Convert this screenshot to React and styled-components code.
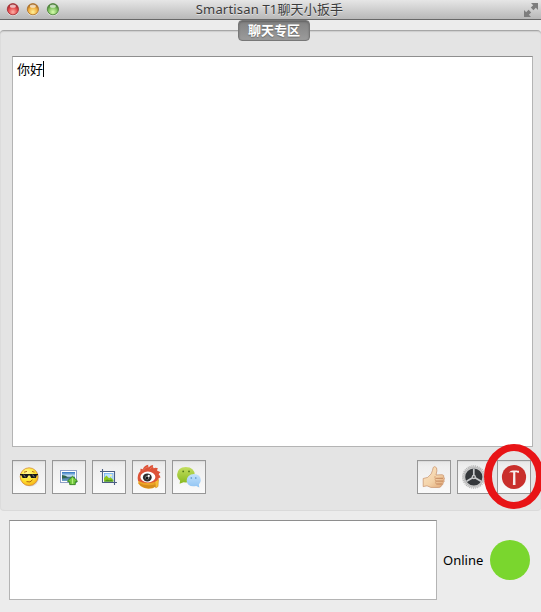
import React from "react";
import styled, { createGlobalStyle } from "styled-components";

const GlobalStyle = createGlobalStyle`
  * { box-sizing: border-box; }
  body {
    margin: 0;
    background: #ececec;
    font-family: "Noto Sans", "Noto Sans CJK SC", sans-serif;
    font-size: 13px;
    color: #000;
  }
`;

const Window = styled.div`
  width: 541px;
  height: 612px;
  overflow: hidden;
  display: flex;
  flex-direction: column;
  background: #ececec;
`;

const TitleBar = styled.header`
  flex: 0 0 20px;
  display: grid;
  grid-template-columns: 100px 1fr 100px;
  align-items: center;
  background: linear-gradient(#e6e6e6, #b8b8b8);
  border-bottom: 1px solid #686868;
`;

const Lights = styled.div`
  display: flex;
  gap: 7px;
  padding-left: 6px;
`;

const Title = styled.h1`
  margin: 0;
  padding-right: 2px;
  font-size: 13px;
  font-weight: 400;
  line-height: 19px;
  letter-spacing: 0.17px;
  text-align: center;
  white-space: nowrap;
  color: #3b3b3b;
  text-shadow: 0 1px 0 rgba(255, 255, 255, 0.5);
`;

const FullScreen = styled.svg`
  justify-self: end;
  margin-right: 3px;
`;

const TabStrip = styled.nav`
  flex: none;
  height: 10px;
  display: flex;
  justify-content: center;
  align-items: flex-start;
  padding-left: 7px;
`;

const Tab = styled.button`
  position: relative;
  z-index: 1;
  flex: none;
  width: 72px;
  height: 21px;
  padding: 0 0 2px;
  border: 1px solid #777;
  border-radius: 4px;
  background: linear-gradient(#828282, #8c8c8c 40%, #9b9b9b);
  box-shadow: inset 0 1px 2px rgba(0, 0, 0, 0.25);
  color: #fff;
  font: 700 13px/17px "Noto Sans CJK SC", sans-serif;
  text-shadow: 0 1px 1px rgba(0, 0, 0, 0.3);
`;

const ChatPane = styled.section`
  flex: 0 0 481px;
  padding: 25px 8px 0 12px;
  background: #e4e4e4;
  border-top: 1px solid #a6a6a6;
  border-bottom: 1px solid #dadada;
  border-radius: 4px;
  box-shadow: inset 0 1px 1px #cdcdcd, inset 1px 0 0 #dedede;
`;

const TextBox = styled.div`
  width: ${(p) => p.$width}px;
  height: ${(p) => p.$height}px;
  padding: 3px 4px;
  background: #fff;
  border: 1px solid #b4b4b4;
  border-top-color: #8e8e8e;
  line-height: 18px;
  display: flex;
`;

const Caret = styled.span`
  width: 1px;
  height: 16px;
  margin-top: 1px;
  background: #000;
`;

const Toolbar = styled.div`
  display: flex;
  justify-content: space-between;
  padding: 13px 2px 0 0;
`;

const ButtonGroup = styled.div`
  display: flex;
  gap: 6px;
`;

const ToolButton = styled.button`
  position: relative;
  width: 34px;
  height: 34px;
  padding: 0;
  border: 1px solid #979797;
  background: linear-gradient(#e6e6e6, #eeeeee 16%, #fafafa);
  box-shadow: inset 0 1px 0 #dcdcdc;

  & > svg { display: block; }
`;

const Ring = styled.span`
  position: absolute;
  z-index: 2;
  top: -17px;
  left: -14px;
  width: 60px;
  height: 65px;
  border: 8px solid #e81416;
  border-width: 7px 8px;
  border-radius: 50%;
  pointer-events: none;
`;

const Composer = styled.footer`
  flex: 1;
  display: flex;
  align-items: flex-start;
  padding: 9px 0 0 9px;
`;

const Status = styled.div`
  height: 80px;
  display: flex;
  align-items: center;
  padding-left: 6px;
`;

const StatusLabel = styled.span`
  width: 47px;
  white-space: nowrap;
`;

const StatusDot = styled.span`
  width: 40px;
  height: 40px;
  border-radius: 50%;
  background: #7ad62e;
`;

function Light({ id, dark, mid, light }) {
  return (
    <svg width="13" height="13" viewBox="0 0 13 13">
      <defs>
        <radialGradient id={id} cx="50%" cy="75%" r="65%">
          <stop offset="0" stopColor={light} />
          <stop offset="0.65" stopColor={mid} />
          <stop offset="1" stopColor={dark} />
        </radialGradient>
      </defs>
      <circle cx="6.9" cy="7" r="6" fill="#f2f2f2" opacity="0.6" />
      <circle cx="6.9" cy="6.2" r="5.6" fill={`url(#${id})`} stroke={dark} strokeWidth="0.8" />
      <ellipse cx="6.9" cy="3.2" rx="3" ry="1.6" fill="#fff" opacity="0.65" />
    </svg>
  );
}

function Glyph({ children }) {
  return <svg width="32" height="32" viewBox="1 1 32 32">{children}</svg>;
}

function SmileIcon() {
  return (
    <Glyph>
      <defs>
        <radialGradient id="smile" cx="40%" cy="30%" r="70%">
          <stop offset="0" stopColor="#fff799" />
          <stop offset="0.6" stopColor="#ffe62e" />
          <stop offset="1" stopColor="#f7b51d" />
        </radialGradient>
      </defs>
      <circle cx="18" cy="17.6" r="8.9" fill="#000" opacity="0.12" />
      <circle cx="17.1" cy="16.7" r="8.9" fill="url(#smile)" stroke="#d58a32" strokeWidth="0.8" />
      <path d="M12 12.2l3-.8M20 11.4l2.5.8" stroke="#a85a16" strokeWidth="0.9" />
      <path d="M8 14h18v1.3h-1.2l-1 2.7h-4.6L18 15.5h-1.6L15 18h-4.4L9.4 15.3H8z" fill="#171717" />
      <path d="M11.5 15l2 1.8M20.5 15l2 1.8" stroke="#bbb" strokeWidth="0.8" />
      <path d="M14.5 21.6q4 1.6 6-1.8" fill="none" stroke="#b06012" strokeWidth="1" />
    </Glyph>
  );
}

function PictureIcon() {
  return (
    <Glyph>
      <defs>
        <linearGradient id="scene" x2="0" y2="1">
          <stop offset="0" stopColor="#2a70bd" />
          <stop offset="0.45" stopColor="#d4ebf8" />
          <stop offset="0.6" stopColor="#47728d" />
          <stop offset="1" stopColor="#6fa4cf" />
        </linearGradient>
      </defs>
      <rect x="8.5" y="10.5" width="16" height="12" fill="#fff" stroke="#8e9fc6" />
      <rect x="10" y="12" width="13" height="9" fill="url(#scene)" />
      <path d="M10 15q4 0 6 2.5l-6 1z" fill="#2f644c" />
      <path d="M20.5 16.3l4.7 4.4v1h-1.9v2.9h-5.6v-2.9h-1.9v-1z" fill="#73c93c" stroke="#2f801c" strokeWidth="0.9" />
      <path d="M20.5 18.3v5.5" stroke="#b5ec83" strokeWidth="1.2" />
    </Glyph>
  );
}

function CropIcon() {
  return (
    <Glyph>
      <path d="M11 12h11v10H11z" fill="#fff" />
      <rect x="12.4" y="13.4" width="8.6" height="7.8" fill="#bfe2fc" stroke="#6eaff0" strokeWidth="0.8" />
      <path d="M12 21.6V18l2.5-2.5 2.5 2.7 1.6-1 2.8 2.8v1.6z" fill="#8ec61c" />
      <path d="M12 21.6l3-2.1 2.5.8 1.8-.8 2.1 2.1z" fill="#4c941a" />
      <circle cx="18.8" cy="15.3" r="1" fill="#fff6a0" />
      <path d="M10.5 9v13.5H25M8 11.5h14.5V25" fill="none" stroke="#4c5f84" strokeWidth="1.1" />
    </Glyph>
  );
}

function WeiboIcon() {
  return (
    <Glyph>
      <path d="M6.3 18.5v5q3.5 5 10.2 5.2 4.6 0 7.5-2.5l2.8-6.7z" fill="#eda528" />
      <path d="M6.5 22.9q8.5 4.1 17.5 1.3v2.2q-8.6 4-15.2-.7z" fill="#d68d1b" />
      <path d="M22.7 21l3.8-1.4-.5 6.9-2.3 1.4z" fill="#f6bd36" stroke="#d18215" strokeWidth="0.5" />
      <path d="M6 20.7Q4.7 14.5 8.4 11.2q-.2-1.8.5-2.7.9 1 1.9.7 1.4-3.8 5.5-4.5-.6 1.6.3 2.7 2.2-2.3 4.6-2.3-.8 1.6.4 3.1 2.5-.9 4.4.2-1.2 1-.8 2.3 2.2.3 3.3 1.9-1.6.6-1.8 2 1.4 1.3 1.8 2.8-2 .3-2.2 1.7-1.1 1.8-3.3 2.6-8.5 3-17-1z" fill="#dd5338" />
      <path d="M10.5 10.7q3.4-3.6 5.9-4M17.7 9.4q1.3-2 3-2.4" fill="none" stroke="#e87058" strokeWidth="1" />
      <ellipse cx="15.9" cy="17" rx="7.5" ry="5.4" fill="#fff" />
      <ellipse cx="15.3" cy="17.4" rx="4.4" ry="4" fill="#2c2c2c" />
      <circle cx="15.3" cy="17.6" r="2" fill="#8b8b8b" />
      <circle cx="15" cy="17.9" r="1.2" fill="#151515" />
      <circle cx="16.8" cy="15.9" r="1.1" fill="#fff" />
    </Glyph>
  );
}

function WechatIcon() {
  return (
    <Glyph>
      <defs>
        <linearGradient id="green" x2="0" y2="1">
          <stop offset="0" stopColor="#c3de60" />
          <stop offset="1" stopColor="#87b91e" />
        </linearGradient>
        <linearGradient id="blue" x2="0" y2="1">
          <stop offset="0" stopColor="#c4e2fc" />
          <stop offset="1" stopColor="#90c4f3" />
        </linearGradient>
      </defs>
      <path d="M13.8 7q8.8.3 8.9 8-.2 7.2-8.9 7.5l-2.2-.2-4 1.5.5-3.4Q5 18 5.1 14.5 5.5 7.4 13.8 7z" fill="url(#green)" />
      <path d="M22 14q6.7.6 6.8 6.3 0 2.4-1.9 4.1l.4 3-3-1.4q-9.1 1.5-9.7-5.2Q15 14.5 22 14z" fill="url(#blue)" />
      <g fill="#527a18"><circle cx="11.2" cy="11.4" r="0.9" /><circle cx="17" cy="11.4" r="0.9" /></g>
      <g fill="#4a8bc4"><circle cx="19.3" cy="18" r="0.8" /><circle cx="23.8" cy="18" r="0.8" /></g>
    </Glyph>
  );
}

function ThumbIcon() {
  return (
    <Glyph>
      <defs>
        <linearGradient id="hand" x2="1" y2="1">
          <stop offset="0" stopColor="#fbe6c6" />
          <stop offset="0.55" stopColor="#f4d3a9" />
          <stop offset="1" stopColor="#dfa473" />
        </linearGradient>
      </defs>
      <path d="M6.2 18.5l4.5-1.1q4.6-3.6 4.8-7 .3-4 2.3-3.8 2.5.5 2.1 4.2l-.9 4.2 6.2-.3q2.1.3 1.5 2.3 1.5 1.4.2 3 .9 1.8-.8 2.8.4 2-1.6 2.7-.5 2-2.7 2l-8-.1-3.8-1.6-3.8.8z" fill="url(#hand)" stroke="#c68f68" strokeWidth="0.7" />
      <path d="M18.5 18.3h7.6M19 21.1h7.2M19.3 24h5.6" fill="none" stroke="#bd7f57" strokeWidth="0.9" />
      <path d="M18.2 16q-.9 1.1.1 2.3-.6 1.5.5 2.8-.5 1.6.4 2.9" fill="none" stroke="#d29a6e" strokeWidth="0.8" />
    </Glyph>
  );
}

function WheelIcon() {
  return (
    <Glyph>
      <circle cx="16.8" cy="17" r="11.1" fill="none" stroke="#b5b5b5" strokeWidth="1.3" strokeDasharray="1.1 .8" />
      <circle cx="16.8" cy="17" r="10.2" fill="#c8c8c8" stroke="#aaa" strokeWidth="0.6" />
      <circle cx="16.8" cy="17" r="8.6" fill="#35383b" />
      <path d="M16.8 8.6V17l7.2 4.3M16.8 17l-7.2 4.3" stroke="#c7c9cb" strokeWidth="1.7" fill="none" />
      <circle cx="16.8" cy="17" r="2.2" fill="#c7c9cb" />
      <circle cx="16.8" cy="17" r="0.9" fill="#555" />
    </Glyph>
  );
}

function HammerIcon() {
  return (
    <Glyph>
      <circle cx="17" cy="17" r="12.1" fill="#c92f2b" />
      <path d="M12 12.4q1.6-1.9 3.8-2h4.4v.4h1.8v2h-1.8v-.5h-1.9l.2 12.6h-2.6l.3-12.3q-2.2-.6-4.2-.2z" fill="#f7eeec" />
    </Glyph>
  );
}

export default function App() {
  return (
    <>
      <GlobalStyle />
      <Window>
        <TitleBar>
          <Lights>
            <Light id="close" dark="#a02b30" mid="#e2484b" light="#ffb0a5" />
            <Light id="minimize" dark="#a96c24" mid="#efad3e" light="#fff29a" />
            <Light id="zoom" dark="#477e35" mid="#7dbe5d" light="#d8ffae" />
          </Lights>
          <Title>Smartisan T1聊天小扳手</Title>
          <FullScreen width="14" height="14" viewBox="0 0 14 14">
            <path d="M7 0h7v7l-2.2-2.2-2.4 2.4-2.6-2.6 2.4-2.4zM0 14V7l2.2 2.2 2.4-2.4 2.6 2.6-2.4 2.4L7 14z" fill="#7d7d7d" />
          </FullScreen>
        </TitleBar>
        <TabStrip><Tab>聊天专区</Tab></TabStrip>
        <ChatPane>
          <TextBox $width={521} $height={391}>你好<Caret /></TextBox>
          <Toolbar>
            <ButtonGroup>
              <ToolButton><SmileIcon /></ToolButton>
              <ToolButton><PictureIcon /></ToolButton>
              <ToolButton><CropIcon /></ToolButton>
              <ToolButton><WeiboIcon /></ToolButton>
              <ToolButton><WechatIcon /></ToolButton>
            </ButtonGroup>
            <ButtonGroup>
              <ToolButton><ThumbIcon /></ToolButton>
              <ToolButton><WheelIcon /></ToolButton>
              <ToolButton><HammerIcon /><Ring /></ToolButton>
            </ButtonGroup>
          </Toolbar>
        </ChatPane>
        <Composer>
          <TextBox $width={428} $height={80} />
          <Status>
            <StatusLabel>Online</StatusLabel>
            <StatusDot />
          </Status>
        </Composer>
      </Window>
    </>
  );
}
